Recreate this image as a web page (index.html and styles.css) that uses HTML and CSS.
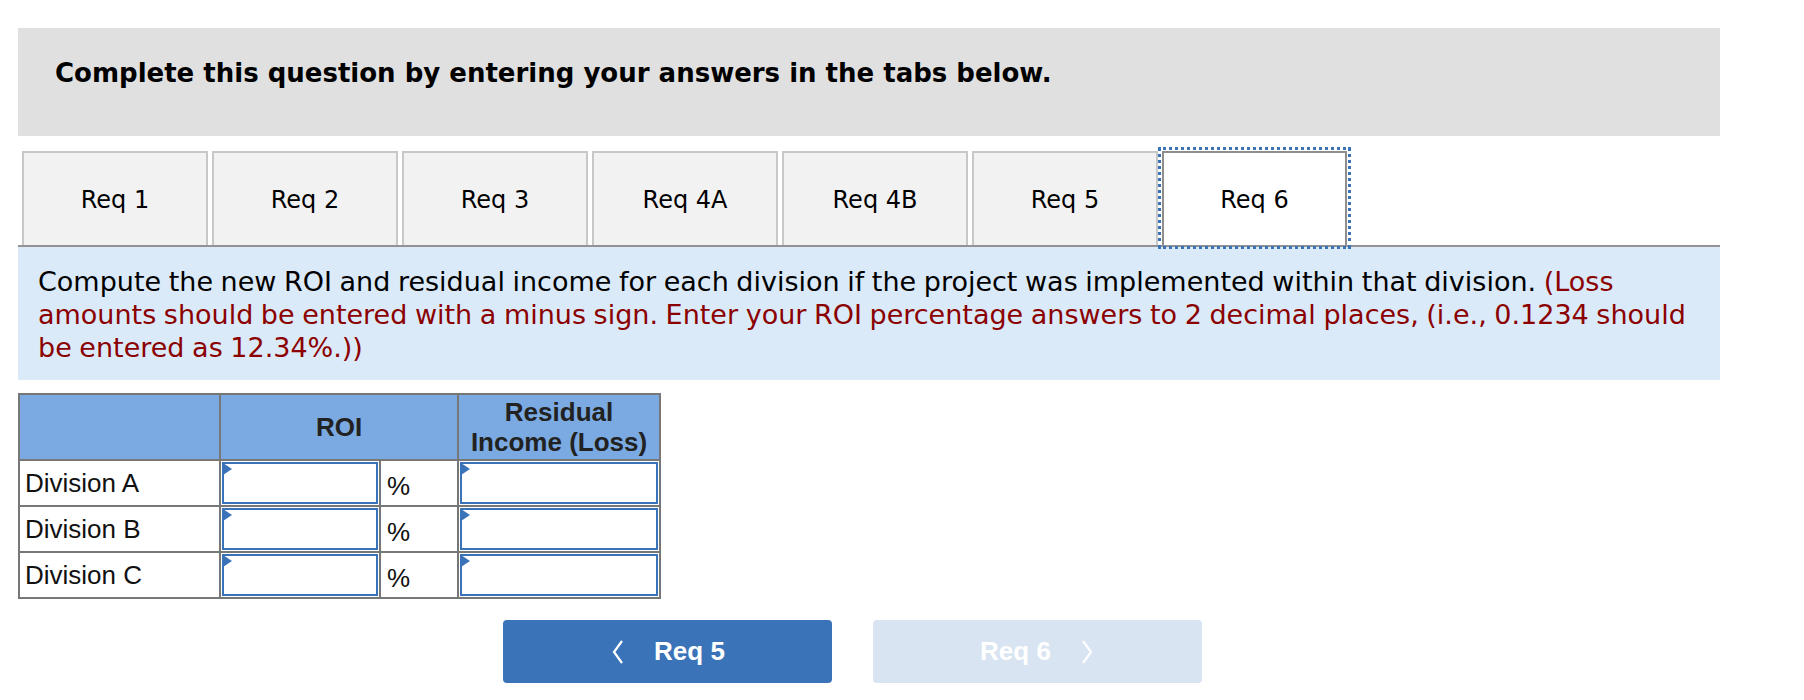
FILE: index.html
```html
<!DOCTYPE html>
<html>
<head>
<meta charset="utf-8">
<link rel="stylesheet" href="styles.css">
</head>
<body>
<div class="page">
  <div class="header">Complete this question by entering your answers in the tabs below.</div>
  <div class="tabs">
    <div class="tab">Req 1</div>
    <div class="tab">Req 2</div>
    <div class="tab">Req 3</div>
    <div class="tab">Req 4A</div>
    <div class="tab">Req 4B</div>
    <div class="tab">Req 5</div>
    <div class="tab active">Req 6</div>
  </div>
  <div class="instructions">Compute the new ROI and residual income for each division if the project was implemented within that division. <span class="red">(Loss amounts should be entered with a minus sign. Enter your ROI percentage answers to 2 decimal places, (i.e., 0.1234 should be entered as 12.34%.))</span></div>
  <table class="grid">
    <colgroup>
      <col class="c1"><col class="c2"><col class="c3"><col class="c4">
    </colgroup>
    <tr class="head">
      <th></th>
      <th colspan="2">ROI</th>
      <th>Residual<br>Income (Loss)</th>
    </tr>
    <tr>
      <td class="label">Division A</td>
      <td class="inp"><div class="field"></div></td>
      <td class="pct">%</td>
      <td class="inp"><div class="field"></div></td>
    </tr>
    <tr>
      <td class="label">Division B</td>
      <td class="inp"><div class="field"></div></td>
      <td class="pct">%</td>
      <td class="inp"><div class="field"></div></td>
    </tr>
    <tr>
      <td class="label">Division C</td>
      <td class="inp"><div class="field"></div></td>
      <td class="pct">%</td>
      <td class="inp"><div class="field"></div></td>
    </tr>
  </table>
  <div class="nav">
    <div class="btn prev">
      <svg class="chev" width="16" height="26" viewBox="0 0 16 26"><path d="M12 2 L4 13 L12 24" fill="none" stroke="#fff" stroke-width="2.2"/></svg>
      <span>Req 5</span>
    </div>
    <div class="btn next">
      <span>Req 6</span>
      <svg class="chev" width="16" height="26" viewBox="0 0 16 26"><path d="M4 2 L12 13 L4 24" fill="none" stroke="#fff" stroke-width="2.2"/></svg>
    </div>
  </div>
</div>
</body>
</html>
```

FILE: styles.css
```css
html, body {
  margin: 0;
  padding: 0;
  background: #fff;
}
.page {
  padding: 28px 0 0 18px;
  width: 1702px;
  font-family: "DejaVu Sans", Verdana, sans-serif;
  color: #000;
}
.header {
  background: #e0e0e0;
  height: 108px;
  box-sizing: border-box;
  padding: 30px 0 0 37px;
  font-size: 26px;
  font-weight: bold;
  line-height: 30px;
}
.tabs {
  display: flex;
  gap: 4px;
  margin-top: 15px;
  padding-left: 4px;
  border-bottom: 2px solid #939393;
  height: 94px;
}
.tab {
  width: 186px;
  box-sizing: border-box;
  height: 94px;
  background: #f2f2f2;
  border: 2px solid #c8c8c8;
  border-bottom: none;
  display: flex;
  align-items: center;
  justify-content: center;
  font-size: 24px;
  padding-top: 2px;
}
.tab.active {
  background: #fff;
  border-color: #8e8e8e;
  outline: 3px dotted #3b73b9;
  outline-offset: 1px;
  width: 185px;
}
.instructions {
  background: #dbeaf8;
  padding: 18px 0 16px 20px;
  font-size: 27px;
  line-height: 33px;
  word-spacing: -1px;
}
.red {
  color: #8b0000;
}
.grid {
  margin-top: 13px;
  border-collapse: collapse;
  border: 2px solid #777;
  font-family: "Liberation Sans", Arial, sans-serif;
  table-layout: fixed;
  width: 641px;
}
.c1 { width: 201px; }
.c2 { width: 160px; }
.c3 { width: 78px; }
.c4 { width: 202px; }
.grid th {
  background: #7aaae1;
  border: 2px solid #777;
  height: 64px;
  font-size: 26px;
  font-weight: bold;
  color: #222;
  line-height: 30px;
  padding: 0;
}
.grid tr {
  height: 46px;
}
.grid td {
  border: 2px solid #777;
  padding: 0;
  font-size: 26px;
  color: #111;
  line-height: 30px;
}
.grid td.label {
  padding-left: 5px;
}
.grid td.inp {
  padding: 1px;
}
.grid td.pct {
  padding: 6px 0 0 6px;
}
.field {
  position: relative;
  height: 42px;
  border: 2px solid #3b73b9;
  box-sizing: border-box;
  background: #fff;
}
.field::before {
  content: "";
  position: absolute;
  left: -1px;
  top: -1px;
  border-left: 9px solid #3b73b9;
  border-top: 6px solid transparent;
  border-bottom: 6px solid transparent;
}
.nav {
  display: flex;
  gap: 41px;
  margin-top: 21px;
  padding-left: 485px;
}
.btn {
  width: 329px;
  height: 63px;
  border-radius: 4px;
  display: flex;
  align-items: center;
  justify-content: center;
  gap: 28px;
  font-family: "Liberation Sans", Arial, sans-serif;
  font-weight: bold;
  font-size: 26px;
  color: #fff;
}
.prev {
  background: #3b73b9;
}
.next {
  background: #d8e4f1;
}
.chev {
  display: block;
}
```
